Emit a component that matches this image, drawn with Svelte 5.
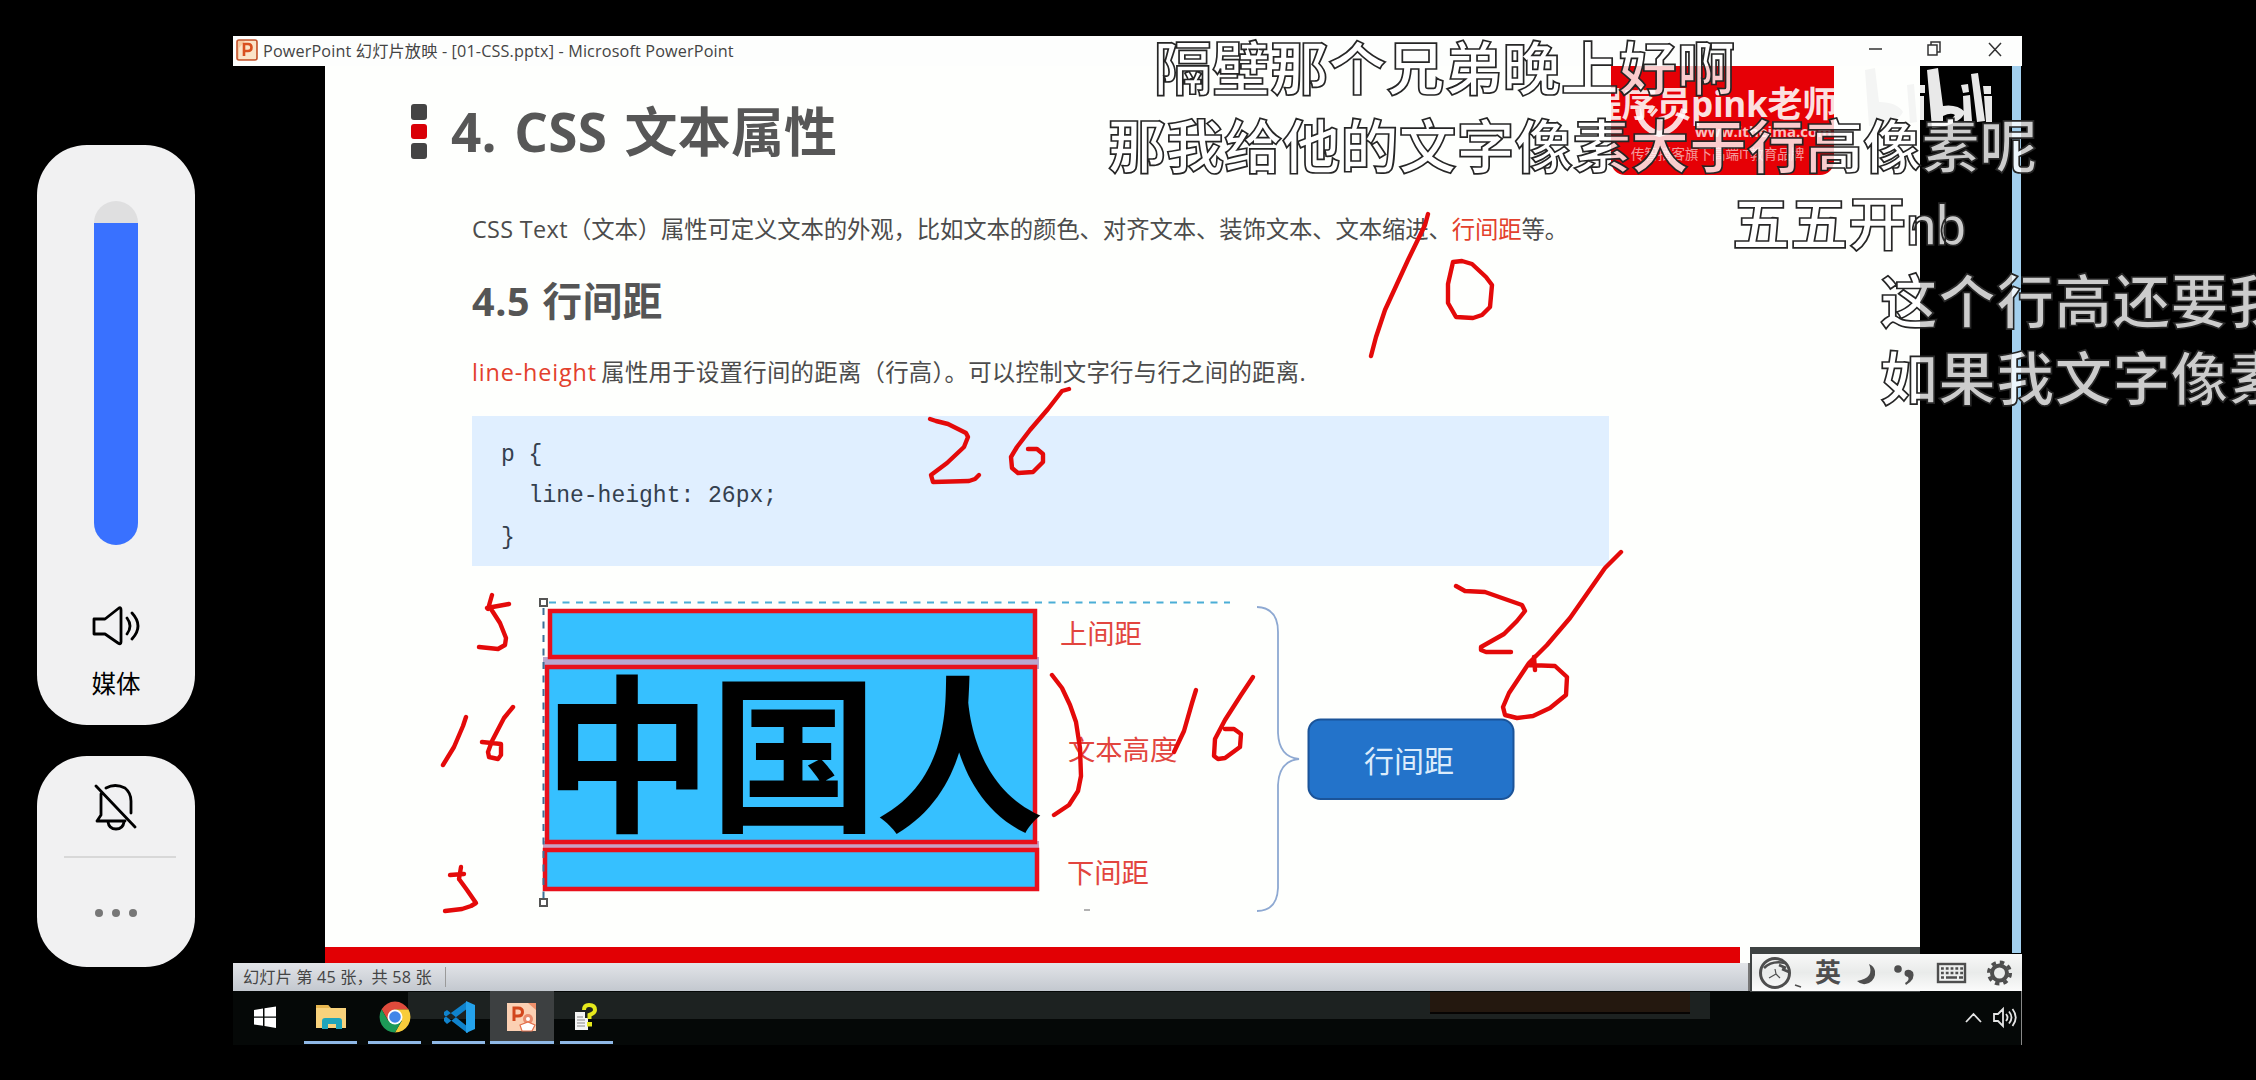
<script>
  const comments = [
    { text: '隔壁那个兄弟晚上好啊', x: 1154, y: 35 },
    { text: '那我给他的文字像素大于行高像素呢', x: 1108, y: 113 },
    { text: '五五开', tail: 'nb', x: 1732, y: 190 },
    { text: '这个行高还要我', x: 1880, y: 268 },
    { text: '如果我文字像素', x: 1880, y: 345 }
  ];

  // Pen strokes drawn over the slide, in stage coordinates.
  const strokes = [
    'M1428 214L1425 225L1408 260L1385 310L1376 337L1371 356',
    'M1453 262L1462 261L1472 264L1486 277L1492 285L1490 307L1482 315L1473 318L1456 317L1448 303L1448 284L1453 262',
    'M930 419L936 421L948 424L966 433L968 437L964 447L947 463L931 475L933 482L969 481L975 479L979 475',
    'M1069 389L1062 391L1048 409L1030 430L1017 447L1011 457L1012 468L1018 473L1033 472L1043 462L1043 454L1037 449L1028 449',
    'M1456 586L1465 591L1485 592L1502 598L1522 605L1525 611L1517 621L1504 634L1481 647L1481 650L1486 652L1511 652',
    'M1621 552L1605 568L1570 618L1547 645L1529 663L1509 693L1503 707L1505 715L1517 718L1533 716L1550 708L1566 695L1567 677L1555 666L1528 665M1534 657L1535 670',
    'M492 595L488 609M487 608L509 604M491 609L500 623L506 638L505 645L498 649L479 647',
    'M466 717L463 726L454 747L443 765',
    'M513 707L504 718L492 741L488 752L489 757L498 759L501 755L501 744L482 742',
    'M461 867L459 879M450 875L464 874M459 879L467 890L476 903L471 906L462 909L445 911',
    'M1052 675L1062 688L1070 705L1076 722L1080 748L1081 776L1078 791L1069 805L1054 815',
    'M1196 690L1192 703L1184 731L1174 752',
    'M1253 677L1241 695L1225 720L1215 739L1214 756L1218 759L1225 758L1240 747L1241 734L1234 729L1225 729'
  ];
</script>

<div class="stage">
  <aside class="volume">
    <section class="card media">
      <div class="slider"><div class="level"></div></div>
      <svg class="speaker" width="52" height="44" viewBox="0 0 52 44" fill="none" stroke="#000" stroke-width="2.8" stroke-linejoin="round" stroke-linecap="round">
        <path d="M4 15H15L29 4Q31 3 31 6V38Q31 41 28 39L15 30H4Z" />
        <path d="M37 14Q43 22 37 30M42 9Q54 22 42 35" />
      </svg>
      <span class="label">媒体</span>
    </section>
    <section class="card mute">
      <svg width="46" height="50" viewBox="0 0 46 50" fill="none" stroke="#000" stroke-width="2.8" stroke-linecap="round" stroke-linejoin="round">
        <path d="M3 4L42 45M8 12V33L4 39H32M13 6Q22 1 32 6Q38 11 38 19V31M15 40Q16 47 23 47Q30 47 31 40" />
      </svg>
      <hr />
      <div class="dots"><i></i><i></i><i></i></div>
    </section>
  </aside>

  <main class="window">
    <header class="titlebar">
      <svg width="22" height="22" viewBox="0 0 22 22">
        <rect x="1" y="1" width="20" height="20" rx="2" fill="#f7c9a0" stroke="#c4532c" stroke-width="1.6" />
        <path d="M3 20V9L9 2H20V20Z" fill="#fbe3c8" />
        <path d="M8 17V5H12Q15.500 5 15.500 8.500Q15.500 12 12 12H9" fill="none" stroke="#d9501f" stroke-width="2.600" />
      </svg>
      <span class="caption">PowerPoint 幻灯片放映 - [01-CSS.pptx] - Microsoft PowerPoint</span>
      <svg class="controls" width="136" height="20" viewBox="0 0 136 20" fill="none" stroke="#333" stroke-width="1.5">
        <path d="M1 10H14M60 6H69V16H60ZM63 6V3H72V13H69M121 4L133 17M133 4L121 17" />
      </svg>
    </header>

    <div class="body">
      <article class="slide">
        <div class="heading">
          <div class="squares"><i></i><i class="red"></i><i></i></div>
          <h1>4. CSS 文本属性</h1>
        </div>
        <p class="intro"><span class="wide">CSS Text</span>（文本）属性可定义文本的外观，比如文本的颜色、对齐文本、装饰文本、文本缩进、<em>行间距</em>等。</p>
        <h2>4.5 行间距</h2>
        <p class="desc"><em class="prop">line-height</em> 属性用于设置行间的距离（行高）。可以控制文字行与行之间的距离.</p>
        <pre class="code">{'p {\n  line-height: 26px;\n}'}</pre>
        <svg class="diagram" width="1200" height="350" viewBox="425 585 1200 350">
          <rect x="543" y="657" width="496" height="12" fill="#b9a6cf" />
          <rect x="543" y="841" width="496" height="9" fill="#c9a0c4" />
          <g fill="#36c0ff" stroke="#e8101c" stroke-width="4.500">
            <rect x="550" y="611" width="485" height="46" />
            <rect x="547" y="667" width="488" height="175" />
            <rect x="545" y="850" width="492" height="39" />
          </g>
          <g stroke="#4aaed6" stroke-width="2" stroke-dasharray="7 6.500">
            <path d="M549 602.500H1230" />
            <path d="M543.500 608V898" stroke="#3d6f96" />
          </g>
          <g fill="#fff" stroke="#555" stroke-width="2">
            <rect x="540" y="599" width="7" height="7" />
            <rect x="540" y="899" width="7" height="7" />
          </g>
          <text class="han" x="543 709.5 875" y="819">中国人</text>
          <g class="tag">
            <text x="1060" y="644">上间距</text>
            <text x="1068" y="760">文本高度</text>
            <text x="1067" y="883">下间距</text>
          </g>
          <path d="M1257 607Q1278 608 1278 632V733Q1279 757 1299 759Q1279 761 1278 785V888Q1277 911 1257 911" fill="none" stroke="#8ea9d2" stroke-width="1.800" />
          <path d="M1084 910H1090" stroke="#999" stroke-width="1.500" />
          <rect x="1308.500" y="719.500" width="205" height="79.500" rx="12" fill="#2373ca" stroke="#1b5499" stroke-width="2" />
          <text class="node" x="1409" y="772" text-anchor="middle">行间距</text>
        </svg>
        <div class="rule"></div>
      </article>
      <div class="edge"></div>
    </div>

    <div class="status">
      <span>幻灯片 第 45 张<b>，</b>共 58 张</span>
    </div>

    <footer class="taskbar">
      <div class="app start">
        <svg width="24" height="24" viewBox="0 0 24 24" fill="#fff"><path d="M1 5L10 3.500V11.500H1ZM11.500 3.300L23 1.500V11.500H11.500ZM1 12.800H10V20.800L1 19.500ZM11.500 12.800H23V23L11.500 21Z" /></svg>
      </div>
      <div class="app run">
        <svg width="32" height="28" viewBox="0 0 32 28">
          <path d="M1 2H13L16 5H31V25H1Z" fill="#f8d27c" /><path d="M1 2H13L15 5H1Z" fill="#e7b64f" />
          <path d="M7 26V18Q7 15 10 15H24Q27 15 27 18V26H21V21H13V26Z" fill="#1fa5ba" />
        </svg>
      </div>
      <div class="app run">
        <svg width="34" height="34" viewBox="-17 -17 34 34">
          <path d="M0 -7.700H13.400A15.500 15.500 0 0 1 0 15.500L6.600 4Z" fill="#f8cc3b" />
          <path d="M-13.400 -7.700L-6.600 4L0 0L0 -7.700H13.400A15.500 15.500 0 0 0 -13.400 -7.700Z" fill="#df4b3c" />
          <path d="M-13.400 -7.700A15.500 15.500 0 0 0 0 15.500L6.600 4H-6.600Z" fill="#1d9a57" />
          <circle r="7.500" fill="#fff" /><circle r="5.800" fill="#4285e8" />
        </svg>
      </div>
      <div class="app run">
        <svg width="34" height="34" viewBox="0 0 34 34">
          <path d="M2 12L5 10L26 27V33L24 32L2 15ZM2 21L5 24L26 8V2L24 2L2 18Z" fill="#1083cd" />
          <path d="M24 1L33 5V29L24 33Z" fill="#24a2ec" />
        </svg>
      </div>
      <div class="app run active">
        <svg width="32" height="30" viewBox="0 0 32 30">
          <rect x="1" y="1" width="29" height="28" fill="#fbd0b3" />
          <path d="M8 19V6H12Q16.500 6 16.500 10Q16.500 14 12 14H9" fill="none" stroke="#d2461c" stroke-width="3" />
          <circle cx="22" cy="17" r="5" fill="#e98b6c" /><circle cx="22" cy="17" r="2" fill="#fff" />
          <path d="M14 23L22 20L29 23L26 29H16Z" fill="#fff" stroke="#e36f4b" stroke-width="1.200" />
          <path d="M22 1H30V8Z" fill="#f0916c" />
        </svg>
      </div>
      <div class="app run">
        <svg width="28" height="30" viewBox="0 0 28 30">
          <path d="M2 10H12V16H15V28H2Z" fill="#f4f4f4" /><path d="M4 15H10M4 18H12M4 21H12M4 24H12" stroke="#888" stroke-width="1.200" />
          <path d="M11 8Q11 3 16 3Q22 3 22 8Q22 11 16.500 13V17" fill="none" stroke="#e6e81c" stroke-width="4" />
          <rect x="14" y="20" width="5" height="4.500" fill="#e6e81c" />
        </svg>
      </div>
      <svg class="tray" width="58" height="24" viewBox="0 0 58 24" fill="none" stroke="#e4e4e4" stroke-width="1.800">
        <path d="M4 17L11.500 9L19 17M32 9H36L41 4V21L36 16H32ZM44 9Q47 12.500 44 16M47 6.500Q52 12.500 47 18.500M50.500 4Q57 12.500 50.500 21" />
      </svg>
    </footer>
  </main>

  <div class="ghost"><div class="ghost-inner"></div></div>

  <div class="badge">
    <span class="teacher">程序员pink老师</span>
    <span class="site">www.itheima.com</span>
    <span class="slogan">传智播客旗下高端IT教育品牌</span>
    <svg class="ring" width="54" height="34" viewBox="0 0 54 34" fill="none" stroke="#fff"><path d="M4 3Q6 22 25 28Q44 24 50 3" stroke-width="6" /><path d="M17 10L23 3" stroke-width="3" /></svg>
  </div>

  <svg class="watermark" width="166" height="62" viewBox="0 0 166 62" fill="#e9e9e9">
    <path class="faint" d="M42 4L52 2L56 36Q74 36 80 46Q74 58 46 60ZM84 19L91 18L94 56L87 57Z" />
    <path d="M104 4L115 2L120 40Q134 38 142 46Q138 58 112 62H109Z" />
    <path d="M120 50Q128 46 132 49Q128 55 120 56Z" fill="#000" />
    <path d="M138 19L145 18L146 26L140 27ZM140 30L147 29L149 55L141 57ZM148 8L155 7L162 55L154 56ZM160 20H168V28H161ZM161 30H169V56H163ZM97 19H102V27H97ZM97 30H101V54H97Z" />
  </svg>

  <div class="ime">
    <svg width="270" height="37" viewBox="0 0 270 37">
      <g fill="none" stroke="#4e4e4e">
        <circle cx="23" cy="19" r="14.500" stroke-width="3" />
        <path d="M12 14Q20 6 33 9M27 11L34 14M30 15L37 18" stroke-width="2.600" />
        <path d="M23 15L24 20L17 24M24 20L28 24" stroke-width="1.200" />
        <path d="M43 31L49 33" stroke-width="1.500" />
      </g>
      <text x="63" y="28">英</text>
      <path d="M117 10Q123 24 105 27Q110 32 117 29Q124 25 123 17Q122 12 117 10Z" fill="#4e4e4e" />
      <circle cx="146" cy="15" r="3.800" fill="#4e4e4e" />
      <path d="M153 17Q157 14 161 18Q164 25 154 31L153 29Q158 26 156 23Q151 22 153 17Z" fill="#4e4e4e" />
      <rect x="186" y="10" width="27" height="18" fill="none" stroke="#4e4e4e" stroke-width="2.400" />
      <path d="M189 14.500H211M189 19H211" stroke="#4e4e4e" stroke-width="2.400" stroke-dasharray="2.800 2" />
      <path d="M189 23.500H192M194 23.500H205M207 23.500H211" stroke="#4e4e4e" stroke-width="2.400" />
      <circle cx="247.500" cy="19" r="7.500" fill="none" stroke="#4e4e4e" stroke-width="4" />
      <circle cx="247.500" cy="19" r="10.800" fill="none" stroke="#4e4e4e" stroke-width="3.500" stroke-dasharray="4.480 4" />
    </svg>
  </div>

  <svg class="ink" width="2256" height="1080" viewBox="0 0 2256 1080">
    {#each strokes as d}
      <path {d} />
    {/each}
  </svg>

  {#each comments as c}
    <div class="comment" style="left:{c.x}px;top:{c.y}px">{c.text}{#if c.tail}<span>{c.tail}</span>{/if}</div>
  {/each}
</div>

<style>
  :global(body) { background: #000; overflow: hidden; }
  .stage {
    position: relative; width: 2256px; height: 1080px; overflow: hidden; background: #000;
    display: flex; font-family: 'Open Sans', 'Noto Sans CJK SC', sans-serif;
  }
  .volume { width: 233px; padding: 145px 38px 0 37px; box-sizing: border-box; display: flex; flex-direction: column; gap: 31px; flex: none; }
  .card { background: #f1f1f2; border-radius: 50px; box-sizing: border-box; display: flex; flex-direction: column; align-items: center; }
  .media { height: 580px; padding-top: 56px; }
  .slider { width: 44px; height: 344px; border-radius: 22px; overflow: hidden; background: #dfdfe0; display: flex; flex-direction: column; justify-content: flex-end; }
  .level { height: 322px; background: #3971ff; }
  .speaker { margin: 59px 0 0 0; }
  .label { font-size: 24.500px; line-height: 30px; color: #000; margin-top: 21px; }
  .mute { height: 211px; padding-top: 26px; }
  .mute hr { width: 112px; height: 2px; border: 0; background: #d8d8d8; margin: 24px 0 0 7px; }
  .dots { display: flex; gap: 9px; margin-top: 51px; }
  .dots i { width: 8px; height: 8px; border-radius: 50%; background: #777; }

  .window { width: 1789px; margin-top: 36px; height: 1009px; display: flex; flex-direction: column; flex: none; }
  .titlebar { height: 30px; background: #fdfefd; display: flex; align-items: center; padding-left: 3px; box-sizing: border-box; flex: none; }
  .titlebar svg { margin-top: -3px; }
  .caption { font-size: 16.200px; color: #444; margin: -2px auto 0 5px; white-space: pre; letter-spacing: 0.150px; }
  .titlebar .controls { margin: -4px 18px 0 0; }

  .body { display: flex; height: 897px; background: #000; padding-left: 92px; box-sizing: border-box; flex: none; }
  .slide { width: 1595px; background: #fefffd; display: flex; flex-direction: column; box-sizing: border-box; padding-top: 38px; color: #4c4c4c; }
  .edge { width: 9px; margin-left: 92px; height: 887px; background: #a3d0ee; }
  .heading { display: flex; height: 55px; padding-left: 86px; gap: 24px; align-items: center; }
  .squares { display: flex; flex-direction: column; gap: 4px; }
  .squares i { width: 16px; height: 15.700px; border-radius: 3px; background: #444; }
  .squares .red { background: #d90007; }
  h1 { margin: 0; font-size: 53px; line-height: 55px; color: #575757; white-space: pre; letter-spacing: 0.200px; word-spacing: 3.500px; }
  p { margin: 0; padding-left: 147px; height: 30px; line-height: 30px; font-size: 23.400px; white-space: nowrap; }
  .intro { margin-top: 55px; letter-spacing: -0.130px; }
  .wide { letter-spacing: 0.350px; }
  em { font-style: normal; color: #e3402c; }
  h2 { margin: 32px 0 0; padding-left: 147px; font-size: 39.500px; line-height: 50px; height: 50px; color: #555; white-space: pre; letter-spacing: 0.600px; word-spacing: 1.500px; }
  .desc { margin-top: 31px; letter-spacing: 0.270px; }
  .prop { letter-spacing: 0.850px; margin-right: -2px; }
  .code {
    margin: 29px 0 0 147px; width: 1137px; height: 150px; box-sizing: border-box; padding: 19px 0 0 29px;
    background: #e0efff; font: 23px/41.300px 'Liberation Mono', monospace; color: #34404e;
  }
  .diagram { margin: 19px 0 0 100px; display: block; flex: none; }
  .diagram text { font-family: 'Noto Sans CJK SC', sans-serif; }
  .diagram .han { font-size: 169px; font-weight: 700; fill: #000; }
  .tag text { font-size: 27.300px; fill: #e2453e; }
  .diagram .node { font-size: 30px; fill: #dcecfb; }
  .rule { height: 16px; width: 1415px; margin-top: 12px; background: #e20004; }

  .status { width: 1517px; height: 28px; background: linear-gradient(#e2e4e8, #c3c8cf); border-right: 2px solid #777; box-sizing: border-box; display: flex; align-items: center; flex: none; }
  .status span { font-size: 16.200px; color: #444; padding-left: 10px; width: 202px; border-right: 1px solid #9a9a9a; white-space: pre; line-height: 20px; letter-spacing: 0.150px; }
  .status b { display: inline-block; width: 15px; font-weight: 400; }

  .taskbar { height: 54px; background: #050807; display: flex; border-right: 1px solid #888; box-sizing: border-box; }
  .app { width: 53px; height: 53px; margin-right: 11px; box-sizing: border-box; display: flex; align-items: center; justify-content: center; padding-top: 1px; border-bottom: 3px solid transparent; position: relative; z-index: 1; }
  .start { margin-left: 5px; margin-right: 13px; }
  .run { border-bottom-color: #8fb8e6; }
  .active { width: 64px; background: #3d4041; margin: 0 6px 0 -6px; }
  .tray { margin: 14px 1px 0 auto; }

  .ghost { position: absolute; left: 408px; top: 992px; width: 1302px; height: 27px; background: rgba(110, 115, 115, 0.24); }
  .ghost-inner { width: 260px; height: 20px; margin-left: 1022px; background: #24180f; border-bottom: 2px solid #060403; }

  .badge { position: absolute; left: 1611px; top: 66px; width: 223px; height: 109px; background: #e60006; color: #fff; border-radius: 0 0 14px 14px; overflow: hidden; }
  .badge span { position: absolute; white-space: nowrap; }
  .teacher { left: -24px; top: 13px; font-size: 35px; line-height: 50px; font-weight: 700; opacity: 0.88; letter-spacing: -0.300px; }
  .site { left: 84px; top: 56px; font-size: 15px; line-height: 18px; opacity: 0.75; font-weight: 700; }
  .slogan { left: 20px; top: 78px; font-size: 13.500px; line-height: 20px; opacity: 0.6; }
  .ring { position: absolute; left: 23px; top: 40px; opacity: 0.85; }
  .watermark { position: absolute; left: 1823px; top: 66px; overflow: visible; }
  .faint { fill: #f4f5f4; }

  .ime { position: absolute; left: 1750px; top: 947px; width: 272px; height: 45px; box-sizing: border-box; padding: 7px 0 0 2px; background: linear-gradient(90deg, #3e4242 170px, transparent 170px); }
  .ime svg { display: block; background: linear-gradient(#f8f8f8, #e9ebea 50%, #fbfbfb); }
  .ime text { font: 700 26px 'Noto Sans CJK SC', sans-serif; fill: #4e4e4e; }

  .ink { position: absolute; left: 0; top: 0; pointer-events: none; }
  .ink path { fill: none; stroke: #e40a0a; stroke-width: 4.400; stroke-linecap: round; stroke-linejoin: round; }

  .comment {
    position: absolute; font: 700 58px/60px 'Noto Sans CJK SC', sans-serif; white-space: nowrap; letter-spacing: 0.100px;
    color: rgba(255, 255, 255, 0.8); -webkit-text-stroke: 1.700px #262626;
  }
  .comment span { font-family: Roboto, sans-serif; font-weight: 500; font-size: 55px; letter-spacing: -1.500px; }
</style>
